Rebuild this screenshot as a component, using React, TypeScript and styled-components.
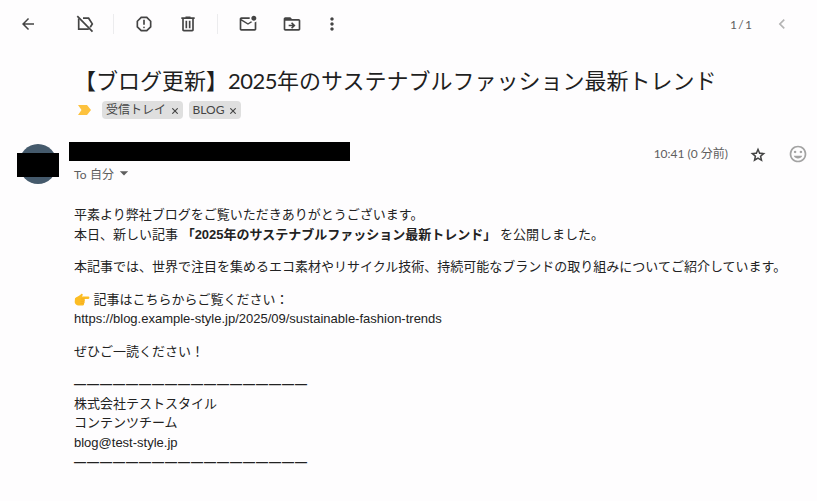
import React from 'react'
import styled, { createGlobalStyle } from 'styled-components'

const cjk = "'Noto Sans CJK JP', sans-serif"

interface IconProps {
  name: keyof typeof icons
  size?: number
}

const icons = {
  back: 'm313-440 224 224-57 56-320-320 320-320 57 56-224 224h487v80H313Z',
  report:
    'M480-280q17 0 28.5-11.5T520-320q0-17-11.5-28.5T480-360q-17 0-28.5 11.5T440-320q0 17 11.5 28.5T480-280Zm-40-160h80v-240h-80v240ZM330-120 120-330v-300l210-210h300l210 210v300L630-120H330Zm34-80h232l164-164v-232L596-760H364L200-596v232l164 164Z',
  trash:
    'M280-120q-33 0-56.5-23.5T200-200v-520h-40v-80h200v-40h240v40h200v80h-40v520q0 33-23.5 56.5T680-120H280Zm400-600H280v520h400v-520ZM360-280h80v-360h-80v360Zm160 0h80v-360h-80v360Z',
  unread:
    'M160-160q-33 0-56.5-23.5T80-240v-480q0-33 23.5-56.5T160-800h404q-4 20-4 40t4 40H160l320 200 146-91q14 13 30.5 22.5T691-572L480-440 160-640v400h640v-324q23-5 43-14t37-22v360q0 33-23.5 56.5T800-160H160ZM760-640q-50 0-85-35t-35-85q0-50 35-85t85-35q50 0 85 35t35 85q0 50-35 85t-85 35Z',
  move: 'm488-360-56 56 56 56 160-160-160-160-56 56 64 64H320v80h176l-8 8ZM160-160q-33 0-56.5-23.5T80-240v-480q0-33 23.5-56.5T160-800h240l80 80h320q33 0 56.5 23.5T880-640v400q0 33-23.5 56.5T800-160H160Zm0-80h640v-400H160v400ZM120-780h280l80 120H120Z',
  more: 'M480-160q-33 0-56.5-23.5T400-240q0-33 23.5-56.5T480-320q33 0 56.5 23.5T560-240q0 33-23.5 56.5T480-160Zm0-240q-33 0-56.5-23.5T400-480q0-33 23.5-56.5T480-560q33 0 56.5 23.5T560-480q0 33-23.5 56.5T480-400Zm0-240q-33 0-56.5-23.5T400-720q0-33 23.5-56.5T480-800q33 0 56.5 23.5T560-720q0 33-23.5 56.5T480-640Z',
  newer: 'M560-240 320-480l240-240 56 56-184 184 184 184-56 56Z',
  star: 'm354-287 126-76 126 77-33-144 111-96-146-13-58-136-58 135-146 13 111 97-33 143ZM233-120l65-281L80-590l288-25 112-265 112 265 288 25-218 189 65 281-247-149-247 149Z',
  smile:
    'M620-520q25 0 42.500-17.500T680-580q0-25-17.500-42.500T620-640q-25 0-42.500 17.500T560-580q0 25 17.500 42.500T620-520Zm-280 0q25 0 42.500-17.500T400-580q0-25-17.500-42.500T340-640q-25 0-42.500 17.500T280-580q0 25 17.500 42.500T340-520Zm140 260q68 0 123.500-38.500T684-400H276q25 63 80.500 101.500T480-260Zm0 180q-83 0-156-31.500T197-197q-54-54-85.500-127T80-480q0-83 31.500-156T197-763q54-54 127-85.500T480-880q83 0 156 31.500T763-763q54 54 85.500 127T880-480q0 83-31.500 156T763-197q-54 54-127 85.500T480-80Zm0-80q134 0 227-93t93-227q0-134-93-227t-227-93q-134 0-227 93t-93 227q0 134 93 227t227 93Z',
  caret: 'M480-360 280-560h400L480-360Z'
}

const Icon: React.FC<IconProps> = ({ name, size = 20 }) => (
  <svg width={size} height={size} viewBox="0 -960 960 960" fill="currentColor">
    <path d={icons[name]} />
  </svg>
)

const LabelOffIcon = () => (
  <svg width="20" height="20" viewBox="0 0 20 20" fill="none" stroke="currentColor" strokeWidth="1.700">
    <path d="M3.700 4.600V15.200H13.800M8 4.200H13.600L17.300 9.900L15.200 13.200" />
    <path d="M2.300 2.200L17.500 17.600" />
  </svg>
)

const PointingHand = () => (
  <svg width="16" height="14" viewBox="0 0 16 14">
    <path
      d="M1 5.200C2.500 3.800 5 3.300 7 1.200C8.200 .2 9.300 1.500 8.500 2.600L7.900 3.500H14.300C15.800 3.500 15.800 5.900 14.300 5.900H10.300C11.200 6.400 11.200 7.800 10.300 8.200C11 8.800 10.800 10 9.900 10.300C10.400 11.200 9.900 12.500 8.800 12.500H4.500C2.500 12.500 1 11 .7 9.300Z"
      fill="#fcbd24"
    />
    <path
      d="M7.200 5.900H10.300M7 8.200H10.200M6.900 10.300H9.800"
      fill="none"
      stroke="#ee9a1c"
      strokeWidth=".5"
      strokeLinecap="round"
    />
  </svg>
)

const labels = ['受信トレイ', 'BLOG']
const rule = '—'.repeat(18)

const App: React.FC = () => {
  return (
    <Page>
      <GlobalStyle />
      <Toolbar>
        <ToolButton $width={56}><Icon name="back" size={18} /></ToolButton>
        <ToolButton $width={57}><LabelOffIcon /></ToolButton>
        <Divider />
        <ToolButton $width={60}><Icon name="report" size={20} /></ToolButton>
        <ToolButton $width={28}><Icon name="trash" size={20} /></ToolButton>
        <Divider $indent={15} />
        <ToolButton $width={60}><Icon name="unread" /></ToolButton>
        <ToolButton $width={28}><Icon name="move" /></ToolButton>
        <ToolButton $width={52}><Icon name="more" size={20} /></ToolButton>
        <Counter>1 / 1</Counter>
        <NewerButton><Icon name="newer" /></NewerButton>
      </Toolbar>

      <Subject>
        【ブログ更新】<SubjectYear>2025</SubjectYear>年のサステナブルファッション最新トレンド
      </Subject>
      <Labels>
        <svg width="14" height="12" viewBox="0 0 14 12">
          <path d="M0 1H9L13 6L9 11H0L3.500 6Z" fill="#fdc23e" />
        </svg>
        {labels.map(label => (
          <Label key={label}>
            {label}
            <RemoveIcon viewBox="0 0 6 6">
              <path d="M.3 .3L5.700 5.700M5.700 .3L.3 5.700" />
            </RemoveIcon>
          </Label>
        ))}
      </Labels>

      <Header>
        <Avatar>
          <AvatarMask />
        </Avatar>
        <Sender>
          <NameMask />
          <Recipient>
            To 自分
            <Icon name="caret" size={20} />
          </Recipient>
        </Sender>
        <Time>10:41 (0 分前)</Time>
        <StarButton><Icon name="star" size={18} /></StarButton>
        <SmileButton><Icon name="smile" size={20} /></SmileButton>
      </Header>

      <Body>
        <Paragraph>
          <Line>平素より弊社ブログをご覧いただきありがとうございます。</Line>
          <Line>
            本日、新しい記事 <strong>「2025年のサステナブルファッション最新トレンド」</strong> を公開しました。
          </Line>
        </Paragraph>
        <Paragraph>
          <Line>
            本記事では、世界で注目を集めるエコ素材やリサイクル技術、持続可能なブランドの取り組みについてご紹介しています。
          </Line>
        </Paragraph>
        <Paragraph>
          <Line>
            <Emoji><PointingHand /></Emoji> 記事はこちらからご覧ください：
          </Line>
          <Line>https://blog.example-style.jp/2025/09/sustainable-fashion-trends</Line>
        </Paragraph>
        <Paragraph>
          <Line>ぜひご一読ください！</Line>
        </Paragraph>
        <Paragraph>
          <Rule>{rule}</Rule>
          <Line>株式会社テストスタイル</Line>
          <Line>コンテンツチーム</Line>
          <Line>blog@test-style.jp</Line>
          <Rule>{rule}</Rule>
        </Paragraph>
      </Body>
    </Page>
  )
}

export default App

const GlobalStyle = createGlobalStyle`
  body {
    margin: 0;
    background: #fefdfe;
  }

  svg {
    display: block;
    flex-shrink: 0;
  }
`

const Page = styled.div`
  box-sizing: border-box;
  width: 817px;
  height: 501px;
  overflow: hidden;
  background: #fefdfe;
  color: #222;
  font-family: Lato, ${cjk};
`

const Toolbar = styled.div`
  display: flex;
  align-items: center;
  height: 48px;
  color: #444;
`

const ToolButton = styled.div<{ $width: number }>`
  display: flex;
  justify-content: center;
  width: ${({ $width }) => $width}px;
`

const Divider = styled.div<{ $indent?: number }>`
  width: 1px;
  height: 20px;
  margin-left: ${({ $indent = 0 }) => $indent}px;
  background: #ececee;
`

const Counter = styled.span`
  margin-left: auto;
  font-size: 12px;
  word-spacing: -1.8px;
  color: #5e5e5e;
`

const NewerButton = styled.div`
  margin: 0 25px 0 20px;
  color: #b4b4b4;
`

const Subject = styled.h2`
  margin: 17px 0 0 74px;
  font-size: 22px;
  font-weight: 400;
  line-height: 32px;
  white-space: nowrap;
  color: #1f1f1f;
`

const SubjectYear = styled.span`
  letter-spacing: -0.5px;
`

const Labels = styled.div`
  display: flex;
  align-items: center;
  height: 18px;
  margin: 4px 0 0 78px;

  > svg {
    margin-right: 10px;
  }
`

const Label = styled.span`
  display: flex;
  align-items: center;
  gap: 5.5px;
  height: 18px;
  margin-right: 6px;
  padding: 0 5px 0 4px;
  border-radius: 4px;
  background: #dfdfdf;
  font-size: 12px;
  line-height: 18px;
  color: #444;
`

const RemoveIcon = styled.svg`
  width: 6px;
  height: 6px;
  margin-top: 2px;
  stroke: #444;
  stroke-width: 1.1;
`

const Header = styled.div`
  display: flex;
  align-items: flex-start;
  margin: 23px 0 0 19px;
  height: 42px;
`

const Avatar = styled.div`
  position: relative;
  width: 38px;
  height: 40px;
  margin-top: 2px;
  border-radius: 50%;
  background: #455a6c;
`

const AvatarMask = styled.div`
  position: absolute;
  top: 9px;
  left: -2px;
  width: 42px;
  height: 24px;
  background: #000;
`

const Sender = styled.div`
  width: 281px;
  margin-left: 12px;
`

const NameMask = styled.div`
  height: 19px;
  background: #000;
`

const Recipient = styled.div`
  display: flex;
  align-items: center;
  height: 24px;
  padding-left: 5px;
  font-size: 12px;
  letter-spacing: 0.15px;
  color: #5e5e5e;
`

const Time = styled.span`
  margin: 3px 21px 0 auto;
  font-size: 12px;
  line-height: 18px;
  color: #5e5e5e;
`

const StarButton = styled.div`
  margin: 4px 21px 0 0;
  color: #444;
`

const SmileButton = styled.div`
  margin: 2px 9px 0 0;
  color: #a3a3a3;
`

const Body = styled.div`
  display: flex;
  flex-direction: column;
  gap: 13px;
  margin: 21px 0 0 74px;
  font-family: 'Liberation Sans', ${cjk};
  font-size: 13px;
`

const Paragraph = styled.div``

const Line = styled.div`
  height: 19.5px;
  line-height: 19.5px;
  white-space: nowrap;
`

const Rule = styled(Line)`
  line-height: 21.5px;
  font-size: 12px;
  font-weight: 700;
  letter-spacing: 1px;
`

const Emoji = styled.span`
  display: inline-block;
  vertical-align: -3px;
`
